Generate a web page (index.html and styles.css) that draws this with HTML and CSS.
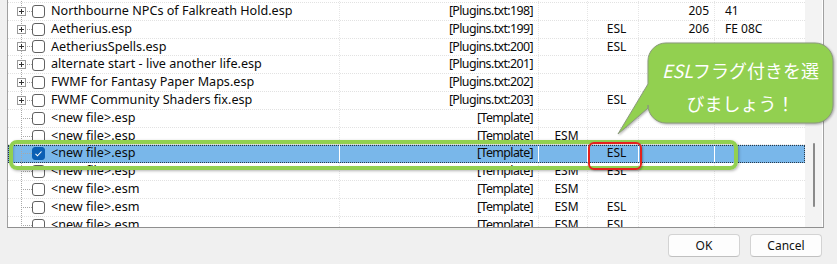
FILE: index.html
```html
<!DOCTYPE html>
<html lang="ja">
<head>
    <meta charset="UTF-8">
    <meta name="viewport" content="width=device-width, initial-scale=1.0">
    <title>Plugin List</title>
    <link rel="stylesheet" href="styles.css">
</head>
<body>
    <div class="dialog">
        <!-- Plugin list -->
        <div class="list">
            <div class="rows">
                <div class="row">
                    <div class="cell name"><span class="tree"><svg class="expander" width="9" height="9" viewBox="0 0 9 9"><rect x="0.5" y="0.5" width="8" height="8" fill="#fff" stroke="#9a9a9a"/><path d="M2 4.5h5M4.5 2v5" stroke="#333"/></svg></span><span class="check"></span><span class="label">Northbourne NPCs of Dawnstar Hold.esp</span></div>
                    <div class="cell origin">[Plugins.txt:197]</div>
                    <div class="cell flag"></div>
                    <div class="cell flag"></div>
                    <div class="cell num">204</div>
                    <div class="cell hex">40</div>
                </div>
                <div class="row">
                    <div class="cell name"><span class="tree"><svg class="expander" width="9" height="9" viewBox="0 0 9 9"><rect x="0.5" y="0.5" width="8" height="8" fill="#fff" stroke="#9a9a9a"/><path d="M2 4.5h5M4.5 2v5" stroke="#333"/></svg></span><span class="check"></span><span class="label">Northbourne NPCs of Falkreath Hold.esp</span></div>
                    <div class="cell origin">[Plugins.txt:198]</div>
                    <div class="cell flag"></div>
                    <div class="cell flag"></div>
                    <div class="cell num">205</div>
                    <div class="cell hex">41</div>
                </div>
                <div class="row">
                    <div class="cell name"><span class="tree"><svg class="expander" width="9" height="9" viewBox="0 0 9 9"><rect x="0.5" y="0.5" width="8" height="8" fill="#fff" stroke="#9a9a9a"/><path d="M2 4.5h5M4.5 2v5" stroke="#333"/></svg></span><span class="check"></span><span class="label">Aetherius.esp</span></div>
                    <div class="cell origin">[Plugins.txt:199]</div>
                    <div class="cell flag"></div>
                    <div class="cell flag">ESL</div>
                    <div class="cell num">206</div>
                    <div class="cell hex">FE 08C</div>
                </div>
                <div class="row">
                    <div class="cell name"><span class="tree"><svg class="expander" width="9" height="9" viewBox="0 0 9 9"><rect x="0.5" y="0.5" width="8" height="8" fill="#fff" stroke="#9a9a9a"/><path d="M2 4.5h5M4.5 2v5" stroke="#333"/></svg></span><span class="check"></span><span class="label">AetheriusSpells.esp</span></div>
                    <div class="cell origin">[Plugins.txt:200]</div>
                    <div class="cell flag"></div>
                    <div class="cell flag">ESL</div>
                    <div class="cell num"></div>
                    <div class="cell hex"></div>
                </div>
                <div class="row">
                    <div class="cell name"><span class="tree"><svg class="expander" width="9" height="9" viewBox="0 0 9 9"><rect x="0.5" y="0.5" width="8" height="8" fill="#fff" stroke="#9a9a9a"/><path d="M2 4.5h5M4.5 2v5" stroke="#333"/></svg></span><span class="check"></span><span class="label">alternate start - live another life.esp</span></div>
                    <div class="cell origin">[Plugins.txt:201]</div>
                    <div class="cell flag"></div>
                    <div class="cell flag"></div>
                    <div class="cell num"></div>
                    <div class="cell hex"></div>
                </div>
                <div class="row">
                    <div class="cell name"><span class="tree"><svg class="expander" width="9" height="9" viewBox="0 0 9 9"><rect x="0.5" y="0.5" width="8" height="8" fill="#fff" stroke="#9a9a9a"/><path d="M2 4.5h5M4.5 2v5" stroke="#333"/></svg></span><span class="check"></span><span class="label">FWMF for Fantasy Paper Maps.esp</span></div>
                    <div class="cell origin">[Plugins.txt:202]</div>
                    <div class="cell flag"></div>
                    <div class="cell flag"></div>
                    <div class="cell num"></div>
                    <div class="cell hex"></div>
                </div>
                <div class="row">
                    <div class="cell name"><span class="tree"><svg class="expander" width="9" height="9" viewBox="0 0 9 9"><rect x="0.5" y="0.5" width="8" height="8" fill="#fff" stroke="#9a9a9a"/><path d="M2 4.5h5M4.5 2v5" stroke="#333"/></svg></span><span class="check"></span><span class="label">FWMF Community Shaders fix.esp</span></div>
                    <div class="cell origin">[Plugins.txt:203]</div>
                    <div class="cell flag"></div>
                    <div class="cell flag">ESL</div>
                    <div class="cell num"></div>
                    <div class="cell hex"></div>
                </div>
                <div class="row">
                    <div class="cell name"><span class="tree"></span><span class="check"></span><span class="label">&lt;new file&gt;.esp</span></div>
                    <div class="cell origin">[Template]</div>
                    <div class="cell flag"></div>
                    <div class="cell flag"></div>
                    <div class="cell num"></div>
                    <div class="cell hex"></div>
                </div>
                <div class="row">
                    <div class="cell name"><span class="tree"></span><span class="check"></span><span class="label">&lt;new file&gt;.esp</span></div>
                    <div class="cell origin">[Template]</div>
                    <div class="cell flag">ESM</div>
                    <div class="cell flag"></div>
                    <div class="cell num"></div>
                    <div class="cell hex"></div>
                </div>
                <div class="row selected">
                    <div class="cell name"><span class="tree"></span><span class="check checked"><svg width="13" height="13" viewBox="0 0 13 13"><path d="M3.5 6.8l2 2 4-4.3" fill="none" stroke="#fff" stroke-width="1.1"/></svg></span><span class="label">&lt;new file&gt;.esp</span></div>
                    <div class="cell origin">[Template]</div>
                    <div class="cell flag"></div>
                    <div class="cell flag">ESL</div>
                    <div class="cell num"></div>
                    <div class="cell hex"></div>
                </div>
                <div class="row">
                    <div class="cell name"><span class="tree"></span><span class="check"></span><span class="label">&lt;new file&gt;.esp</span></div>
                    <div class="cell origin">[Template]</div>
                    <div class="cell flag">ESM</div>
                    <div class="cell flag">ESL</div>
                    <div class="cell num"></div>
                    <div class="cell hex"></div>
                </div>
                <div class="row">
                    <div class="cell name"><span class="tree"></span><span class="check"></span><span class="label">&lt;new file&gt;.esm</span></div>
                    <div class="cell origin">[Template]</div>
                    <div class="cell flag">ESM</div>
                    <div class="cell flag"></div>
                    <div class="cell num"></div>
                    <div class="cell hex"></div>
                </div>
                <div class="row">
                    <div class="cell name"><span class="tree"></span><span class="check"></span><span class="label">&lt;new file&gt;.esm</span></div>
                    <div class="cell origin">[Template]</div>
                    <div class="cell flag">ESM</div>
                    <div class="cell flag">ESL</div>
                    <div class="cell num"></div>
                    <div class="cell hex"></div>
                </div>
                <div class="row">
                    <div class="cell name"><span class="tree"></span><span class="check"></span><span class="label">&lt;new file&gt;.esm</span></div>
                    <div class="cell origin">[Template]</div>
                    <div class="cell flag">ESM</div>
                    <div class="cell flag">ESL</div>
                    <div class="cell num"></div>
                    <div class="cell hex"></div>
                </div>
            </div>
            <div class="scrollbar"><div class="thumb"></div></div>
        </div>

        <!-- Buttons -->
        <div class="buttons">
            <button class="btn">OK</button>
            <button class="btn">Cancel</button>
        </div>

        <!-- Annotations -->
        <div class="mark-row"></div>
        <div class="mark-esl"></div>
        <div class="callout">
            <svg class="bubble" width="225" height="100" viewBox="0 0 225 100">
                <path d="M54 5H203A18 18 0 0 1 221 23V67A18 18 0 0 1 203 85H54A18 18 0 0 1 36 67V70L6 96L36 46V23A18 18 0 0 1 54 5Z" fill="#92d050" stroke="#8a9a7a" stroke-width="1"/>
            </svg>
            <div class="callout-text"><i>ESL</i>フラグ付きを選<br>びましょう！</div>
        </div>
    </div>
</body>
</html>
```

FILE: styles.css
```css
* {
    box-sizing: border-box;
    margin: 0;
    padding: 0;
}

body {
    font-family: "Noto Sans", sans-serif;
    font-size: 12px;
    background-color: #f0f0f0;
    color: #0a0a0a;
    overflow: hidden;
}

.dialog {
    position: relative;
    height: 264px;
    display: flex;
    flex-direction: column;
}

/* List view */
.list {
    margin-left: 7px;
    width: 817px;
    height: 228px;
    display: flex;
    background: #fff;
    border-left: 1px solid #a0a0a0;
    border-right: 1px solid #a0a0a0;
    border-bottom: 1px solid #8f8f8f;
    overflow: hidden;
}

.rows {
    width: 797px;
    margin-top: -14.9px;
}

.row {
    display: flex;
    height: 17.82px;
    line-height: 16.8px;
    border-bottom: 1px dotted #e2e2e2;
    white-space: nowrap;
}

.cell {
    border-right: 1px dotted #e6e6e6;
    overflow: hidden;
}

.name {
    width: 332px;
    display: flex;
    align-items: center;
}

.label {
    font-size: 12.6px;
}

.origin {
    width: 199px;
    text-align: right;
    padding-right: 5px;
    font-size: 12.4px;
    letter-spacing: -0.6px;
}

.flag {
    width: 49px;
    text-align: center;
    padding-left: 7px;
}

.flag + .flag {
    width: 51px;
}

.num {
    width: 76px;
    text-align: right;
    padding-right: 5px;
}

.hex {
    width: 90px;
    padding-left: 10px;
    border-right: none;
}

/* Tree lines drawn as dotted gradients */
.tree {
    width: 24px;
    align-self: stretch;
    display: flex;
    align-items: center;
    background:
        repeating-linear-gradient(to bottom, #a8a8a8 0 1px, transparent 1px 2px) 13px 0 / 1px 100% no-repeat,
        repeating-linear-gradient(to right, #a8a8a8 0 1px, transparent 1px 2px) 13px 50% / 11px 1px no-repeat;
}

.expander {
    display: block;
    margin-left: 9px;
}

.check {
    width: 13px;
    height: 13px;
    border: 1px solid #616161;
    border-radius: 3px;
    background: #fff;
    margin-right: 6px;
    flex-shrink: 0;
}

.check.checked {
    background: #0a5fb4;
    border-color: #0a5fb4;
}

.check svg {
    display: block;
    margin: -1px;
}

.row.selected {
    background: #79b7ea;
    outline: 1px dotted #2a3a4a;
    outline-offset: -1px;
}

.row.selected .cell {
    border-right: 1px solid #fff;
}

.row.selected .hex {
    border-right: none;
}

.scrollbar {
    width: 17px;
    background: #f3f3f3;
    border-left: 1px solid #f3f3f3;
    display: flex;
    justify-content: center;
}

.thumb {
    width: 2px;
    height: 64px;
    margin-top: 143px;
    background: #8a8a8a;
    border-radius: 1px;
}

/* Dialog buttons */
.buttons {
    display: flex;
    justify-content: flex-end;
    gap: 10px;
    padding: 6px 15px 0 0;
}

.btn {
    width: 72px;
    height: 23px;
    font-family: "Noto Sans", sans-serif;
    font-size: 12px;
    color: #111;
    background: #fdfdfd;
    border: 1px solid #d3d3d3;
    border-bottom-color: #c0c0c0;
    border-radius: 4px;
}

/* Annotations over the list */
.mark-row {
    position: absolute;
    left: 9px;
    top: 140px;
    width: 729px;
    height: 30px;
    border: 4px solid #92d050;
    border-radius: 8px;
    box-shadow: 1px 1px 3px rgba(0, 0, 0, 0.3), inset 1px 1px 2px rgba(0, 0, 0, 0.15);
}

.mark-esl {
    position: absolute;
    left: 588px;
    top: 142px;
    width: 54px;
    height: 28px;
    border: 2px solid #e3211c;
    border-radius: 6px;
    box-shadow: 1px 1px 2px rgba(0, 0, 0, 0.3);
}

.callout {
    position: absolute;
    left: 612px;
    top: 38px;
    width: 225px;
    height: 100px;
}

.bubble {
    display: block;
    filter: drop-shadow(1px 1px 1px rgba(0, 0, 0, 0.3));
}

.callout-text {
    position: absolute;
    left: 36px;
    top: 16px;
    width: 185px;
    text-align: center;
    font-family: "Noto Sans CJK JP", sans-serif;
    font-size: 18px;
    line-height: 33px;
    color: #fff;
}

.callout-text i {
    font-style: italic;
}
```
